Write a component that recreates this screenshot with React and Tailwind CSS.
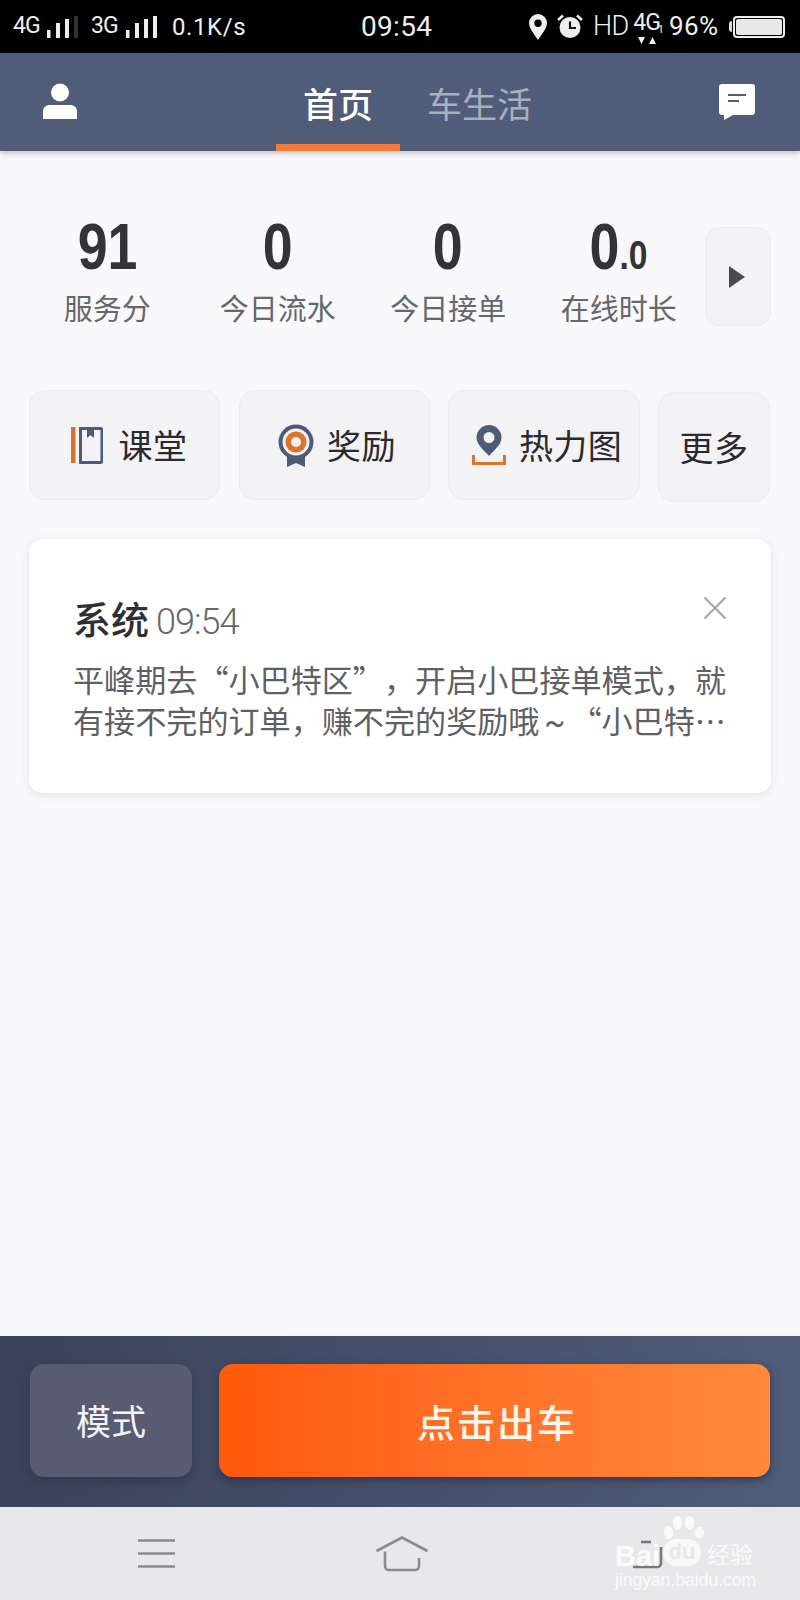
import React from "react";

const CJK = { fontFamily: '"Noto Sans CJK SC", sans-serif' };

function Bars({ dim }) {
  return (
    <svg width="32" height="24" viewBox="0 0 32 24" className="shrink-0">
      <rect x="0" y="15" width="3.5" height="8" fill="#eee" />
      <rect x="9" y="8" width="4" height="15" fill="#eee" />
      <rect x="18" y="4" width="4" height="19" fill="#eee" />
      <rect x="27" y="1" width="4" height="22" fill={dim ? "#333" : "#eee"} />
    </svg>
  );
}

function StatusBar() {
  return (
    <div className="h-[53px] bg-black flex items-center text-[#eeeeee] shrink-0 font-['Roboto',sans-serif] pl-[13px]">
      <span className="text-[23px] w-[34px] tracking-[-1px]">4G</span>
      <Bars dim />
      <span className="text-[23px] w-[35px] ml-[12px] tracking-[-1px]">3G</span>
      <Bars />
      <span className="text-[24px] ml-[14px] w-[189px] tracking-[0.6px]">0.1K/s</span>
      <span className="text-[28px] w-[168px] tracking-[0.3px]">09:54</span>
      <svg width="18" height="26" viewBox="0 0 18 26" className="shrink-0">
        <path fillRule="evenodd" fill="#eee" d="M9 0a9 9 0 0 1 9 9c0 5-5 11-9 17C5 20 0 14 0 9a9 9 0 0 1 9-9Zm0 5.5a3.7 3.7 0 1 0 0 7.4 3.7 3.7 0 0 0 0-7.4Z" />
      </svg>
      <svg width="26" height="25" viewBox="0 0 26 25" className="shrink-0 ml-[10px]">
        <circle cx="13" cy="13.5" r="10.5" fill="#eee" />
        <path d="M13 7.5v6.5h6" fill="none" stroke="#111" strokeWidth="2.2" />
        <path d="M1 6 6 1.5M25 6l-5-4.500" fill="none" stroke="#eee" strokeWidth="2.5" />
      </svg>
      <span className="text-[27px] ml-[10px] w-[36px] tracking-[-0.5px] font-light">HD</span>
      <span className="relative w-[35px] h-[40px] shrink-0 flex flex-col items-center">
        <span className="text-[23px] leading-[27px] mt-[2px] tracking-[-1px]">4G</span>
        <svg width="20" height="8" viewBox="0 0 20 8">
          <path d="M1 1h7L4.500 8ZM12 8h7l-3.500-7Z" fill="#eee" />
        </svg>
        <span className="absolute right-0 top-[16px] text-[11px] leading-[14px]">1</span>
      </span>
      <span className="text-[26px] ml-[5px] w-[62px] tracking-[0.4px]">96%</span>
      <span className="w-[3px] h-[11px] bg-[#ddd] rounded-l-sm ml-[-2px]" />
      <span className="ml-[1px] w-[52px] h-[22px] rounded-[4px] border-2 border-[#eee] p-[1px] shrink-0">
        <span className="block h-full bg-[#e9e7e9] rounded-[2px]" />
      </span>
    </div>
  );
}

function Header() {
  return (
    <div className="h-[98px] bg-[#505c78] flex items-center shrink-0 relative shadow-[0_2px_6px_rgba(80,80,90,0.35)]" style={CJK}>
      <svg width="36" height="38" viewBox="0 0 36 38" className="ml-[42px] shrink-0">
        <circle cx="18" cy="9.500" r="9" fill="#fff" />
        <path d="M1 36V29c0-5 3-7 7-7h20c4 0 7 2 7 7v7Z" fill="#fff" />
      </svg>
      <div className="ml-[198px] w-[124px] h-full flex items-center justify-center border-b-[7px] border-[#f47b3c] pt-[7px]">
        <span className="text-[35px] font-medium text-white leading-none">首页</span>
      </div>
      <span className="ml-[27px] text-[35px] text-[#a8afc1] leading-none">车生活</span>
      <svg width="38" height="38" viewBox="0 0 38 38" className="ml-[186px] shrink-0">
        <path d="M4 1h30a3 3 0 0 1 3 3v25a3 3 0 0 1-3 3H15L6 37v-5H4a3 3 0 0 1-3-3V4a3 3 0 0 1 3-3Z" fill="#fff" />
        <path d="M10 12h18M10 18h11" stroke="#505c78" strokeWidth="2" />
      </svg>
    </div>
  );
}

function Stat({ value, small, label }) {
  return (
    <div className="w-[170.5px] flex flex-col items-center shrink-0">
      <div className="h-[60px] leading-[60px] text-[64px] font-bold text-[#333338] font-['Liberation_Sans',sans-serif] scale-x-[0.84] whitespace-nowrap">
        {value}
        {small && <span className="text-[40px]">{small}</span>}
      </div>
      <div className="mt-[12px] h-[36px] leading-[36px] text-[29px] text-[#66666b] whitespace-nowrap" style={CJK}>{label}</div>
    </div>
  );
}

function Stats() {
  return (
    <div className="flex pl-[22px] pt-[66px] items-start shrink-0">
      <Stat value="91" label="服务分" />
      <Stat value="0" label="今日流水" />
      <Stat value="0" label="今日接单" />
      <Stat value="0" small=".0" label="在线时长" />
      <div className="ml-[1px] mt-[10px] w-[66px] h-[99px] rounded-[14px] bg-[#f3f2f5] border border-[#ececef] flex items-center justify-center">
        <svg width="16" height="24" viewBox="0 0 16 24" className="mr-[2px]"><path d="M0 1 16 12 0 23Z" fill="#4a4a50" /></svg>
      </div>
    </div>
  );
}

function QuickBtn({ icon, label, className }) {
  return (
    <div className={`h-[110px] rounded-[16px] bg-[#f3f2f5] border border-[#ececef] flex items-center justify-center ${className}`}>
      {icon}
      <span className="text-[34px] text-[#2a2a2e] leading-none tracking-[0.4px]" style={CJK}>{label}</span>
    </div>
  );
}

const BookIcon = (
  <svg width="32" height="37" viewBox="0 0 32 37" className="mr-[16px] shrink-0">
    <rect x="0" y="0" width="4.500" height="36" fill="#d9702d" />
    <path d="M9.500 1.500h20a1.500 1.500 0 0 1 1.500 1.500v31a1.500 1.500 0 0 1-1.500 1.500h-20Z" fill="none" stroke="#4e5b78" strokeWidth="3" />
    <path d="M16 1h7v10l-3.500-3-3.500 3Z" fill="#4e5b78" />
  </svg>
);
const MedalIcon = (
  <svg width="36" height="43" viewBox="0 0 36 43" className="mr-[13px] shrink-0">
    <path d="M9 28v15l9-4 9 4V28Z" fill="#4e5b78" />
    <circle cx="18" cy="18" r="17.500" fill="#4e5b78" />
    <circle cx="18" cy="18" r="13.500" fill="#f3f2f5" />
    <circle cx="18" cy="18" r="10.500" fill="#de7329" />
    <circle cx="18" cy="18" r="5" fill="#f3f2f5" />
  </svg>
);
const PinIcon = (
  <svg width="34" height="41" viewBox="0 0 34 41" className="mr-[13px] shrink-0">
    <path fillRule="evenodd" d="M17 0a12.500 12.500 0 0 1 12.500 12.500C29.500 20 22 25 17 31 12 25 4.500 20 4.500 12.500A12.500 12.500 0 0 1 17 0Zm0 7a5.500 5.500 0 1 0 0 11 5.500 5.500 0 0 0 0-11Z" fill="#4e5b78" />
    <path d="M1.500 30v8.500h31V30" fill="none" stroke="#de7329" strokeWidth="3" />
  </svg>
);

function Quick() {
  return (
    <div className="flex px-[29px] mt-[64px] items-start shrink-0">
      <QuickBtn icon={BookIcon} label="课堂" className="w-[191px] pl-[9px]" />
      <QuickBtn icon={MedalIcon} label="奖励" className="w-[191px] ml-[19px] pl-[5px]" />
      <QuickBtn icon={PinIcon} label="热力图" className="w-[192px] ml-[18px] pl-[6px]" />
      <QuickBtn label="更多" className="w-[112px] ml-[18px] mt-[2px]" />
    </div>
  );
}

function Card() {
  return (
    <div className="mx-[29px] mt-[37px] h-[254px] shrink-0 rounded-[14px] bg-white shadow-[0_2px_8px_rgba(60,60,80,0.12)] pl-[44px] pt-[52px] relative">
      <div className="flex items-baseline h-[54px]">
        <span className="text-[38px] font-medium text-[#2f2f33] leading-[54px]" style={CJK}>系统</span>
        <span className="ml-[7px] text-[36px] text-[#66666b] font-['Roboto',sans-serif] font-light tracking-[-1px]">09:54</span>
      </div>
      <p className="text-[31.100px] leading-[41px] text-[#5f5f64] mt-[13px] whitespace-nowrap [text-spacing-trim:space-all]" style={CJK}>
        平峰期去“小巴特区”，开启小巴接单模式，就<br />有接不完的订单，赚不完的奖励哦<span className="inline-block w-[31px] text-center font-['Roboto',sans-serif]">~</span>“小巴特…
      </p>
      <svg width="24" height="24" viewBox="0 0 24 24" className="absolute right-[44px] top-[57px]">
        <path d="M1.500 1.500 22.500 22.500M22.500 1.500 1.500 22.500" stroke="#a9a9ad" strokeWidth="2.200" />
      </svg>
    </div>
  );
}

function BottomBar() {
  return (
    <div className="h-[171px] shrink-0 bg-gradient-to-r from-[#3b425b] to-[#505c78] flex items-start pt-[28px] pl-[30px]" style={CJK}>
      <div className="w-[162px] h-[113px] rounded-[14px] bg-[#575c73] shadow-[0_4px_10px_rgba(30,35,55,0.35)] flex items-center justify-center text-[35px] text-[#f4f4f6]">
        模式
      </div>
      <div className="ml-[27px] w-[551px] h-[113px] rounded-[14px] bg-gradient-to-r from-[#ff5808] to-[#ff893c] shadow-[0_3px_8px_rgba(30,30,50,0.55)] flex items-center justify-center text-[38px] text-[#fff6ee] font-medium tracking-[2px] pl-[5px]">
        点击出车
      </div>
    </div>
  );
}

function NavBar() {
  return (
    <div className="h-[93px] shrink-0 bg-[#e8e7ea] relative flex items-center">
      <svg width="38" height="30" viewBox="0 0 38 30" className="ml-[138px] shrink-0">
        <path d="M0 1.500h37M0 14.500h37M0 27.500h37" stroke="#8b8b90" strokeWidth="2.600" />
      </svg>
      <svg width="54" height="36" viewBox="0 0 54 36" className="ml-[199px] shrink-0">
        <path d="M1.500 15 27 1.500 52.500 15M10 15.500V30a4 4 0 0 0 4 4h26a4 4 0 0 0 4-4v-8" fill="none" stroke="#8b8b90" strokeWidth="2.600" />
      </svg>
      <svg width="34" height="30" viewBox="0 0 34 30" className="ml-[202px] shrink-0">
        <path d="M2 28h24a4 4 0 0 0 4-4V8" fill="none" stroke="#77777c" strokeWidth="2.600" />
        <path d="M10 3h10" stroke="#77777c" strokeWidth="2.600" />
      </svg>
      <div className="absolute left-[613px] top-[8px] w-[150px] h-[78px] text-white/80 pointer-events-none">
        <div className="absolute left-[2px] top-[29px] text-[29px] font-bold leading-[24px] font-['Liberation_Sans',sans-serif]">Bai</div>
        <svg width="42" height="30" viewBox="0 0 46 32" className="absolute left-[50px] top-0">
          <g fill="currentColor">
            <ellipse cx="6" cy="19" rx="5" ry="7" />
            <ellipse cx="16" cy="8" rx="5" ry="7.500" />
            <ellipse cx="29" cy="8" rx="5" ry="7.500" />
            <ellipse cx="40" cy="19" rx="5" ry="6.500" />
          </g>
        </svg>
        <div className="absolute left-[50px] top-[24px] w-[38px] h-[27px] rounded-[14px] bg-white/70 text-[#e8e7ea] text-[22px] leading-[26px] text-center font-bold font-['Liberation_Sans',sans-serif]">du</div>
        <div className="absolute left-[94px] top-[24px] text-[23px] leading-[28px] whitespace-nowrap" style={CJK}>经验</div>
        <div className="absolute left-[2px] top-[54px] text-[17.500px] leading-[22px] whitespace-nowrap font-['Liberation_Sans',sans-serif]">jingyan.baidu.com</div>
      </div>
    </div>
  );
}

export default function App() {
  return (
    <div className="w-[800px] h-[1600px] bg-[#f9f8fb] flex flex-col overflow-hidden">
      <StatusBar />
      <Header />
      <Stats />
      <Quick />
      <Card />
      <div className="flex-1" />
      <BottomBar />
      <NavBar />
    </div>
  );
}
